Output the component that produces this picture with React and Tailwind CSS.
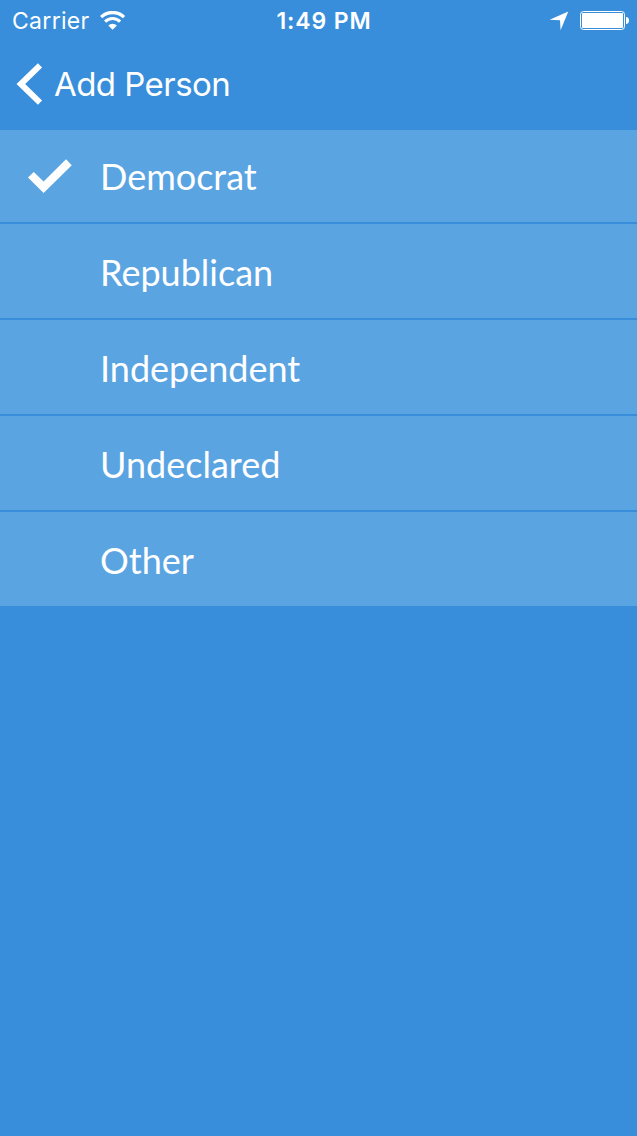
import React from "react";

const options = ["Democrat", "Republican", "Independent", "Undeclared", "Other"];

function WifiIcon() {
  return (
    <svg className="h-[20px] w-[28px] shrink-0" viewBox="99 10 28 20" fill="none" stroke="#fff">
      <path d="M101.2 16.2a16.2 16.2 0 0 1 22.8 0" strokeWidth="3.3" />
      <path d="M105.1 20.6a10.6 10.6 0 0 1 15 0" strokeWidth="3" />
      <path d="M112.6 28.8l-4.3-4.3a6.1 6.1 0 0 1 8.600 0z" fill="#fff" stroke="none" />
    </svg>
  );
}

function StatusBar() {
  return (
    <div className="grid h-[42px] grid-cols-[1fr_auto_1fr] items-center pl-[12px] pr-[8px] text-white">
      <div className="flex items-center">
        <span className="w-[87px] text-[23px] font-normal leading-10 tracking-[0.3px]">Carrier</span>
        <WifiIcon />
      </div>
      <span className="pl-[7px] text-[23px] font-semibold leading-10 tracking-[0.9px]">1:49 PM</span>
      <div className="flex items-center justify-end">
        <svg className="mr-[11px] h-[20px] w-[20px]" viewBox="549 11 20 20" fill="#fff">
          <path d="M568.3 11.6L560.6 30.3L560 20.2L549.6 19.7Z" />
        </svg>
        <svg className="h-[20px] w-[49px]" viewBox="580 11 49 20" fill="none">
          <rect x="580.5" y="11.5" width="44" height="18" rx="3" stroke="#fff" />
          <rect x="582" y="13" width="41" height="15" rx="1" fill="#fff" />
          <path d="M626 17c2 0 3 1.5 3 3.5s-1 3.5-3 3.5z" fill="#fff" />
        </svg>
      </div>
    </div>
  );
}

export default function App() {
  return (
    <div className="flex h-[1136px] w-full flex-col overflow-hidden bg-[#388eda] font-['Inter',sans-serif] text-white">
      <StatusBar />
      <header className="flex h-[88px] items-start pl-[16px] pt-5">
        <svg className="h-[44px] w-[28px]" viewBox="16 62 28 44" fill="none" stroke="#fff">
          <path d="M40 65.3L20.8 84L40 102.7" strokeWidth="6" />
        </svg>
        <h1 className="pl-[10px] text-[33px] font-normal leading-[44px] tracking-[-0.55px]">Add Person</h1>
      </header>
      <ul className="flex flex-col gap-[2px] font-['Lato',sans-serif] text-[36px]">
        {options.map((name, i) => (
          <li
            key={name}
            className="flex h-[94px] items-end bg-[#5ba4e2] pb-[24px] pl-[28px] first:h-[92px]"
          >
            <span className="flex h-[44px] w-[72px] shrink-0 items-center">
              {i === 0 && (
                <svg className="h-[34px] w-[44px]" viewBox="28 159 44 34" fill="#fff">
                  <path d="M28 177.6L33.8 172L43.6 181.6L66 159.3L71.8 165.2L43.6 193Z" />
                </svg>
              )}
            </span>
            <span className="leading-[44px]">{name}</span>
          </li>
        ))}
      </ul>
    </div>
  );
}
